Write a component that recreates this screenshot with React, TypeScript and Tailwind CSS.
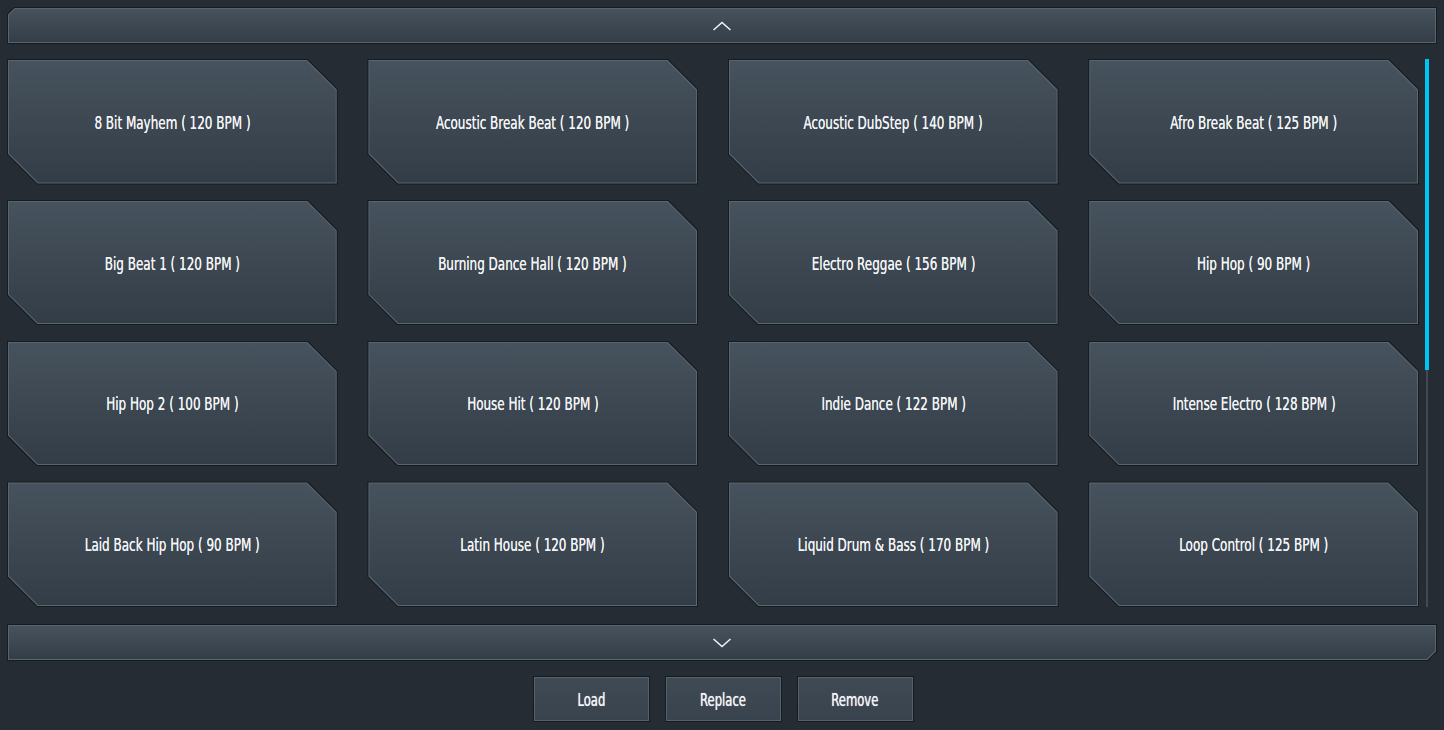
import React from 'react';

const loops = [
  '8 Bit Mayhem ( 120 BPM )',
  'Acoustic Break Beat ( 120 BPM )',
  'Acoustic DubStep ( 140 BPM )',
  'Afro Break Beat ( 125 BPM )',
  'Big Beat 1 ( 120 BPM )',
  'Burning Dance Hall ( 120 BPM )',
  'Electro Reggae ( 156 BPM )',
  'Hip Hop ( 90 BPM )',
  'Hip Hop 2 ( 100 BPM )',
  'House Hit ( 120 BPM )',
  'Indie Dance ( 122 BPM )',
  'Intense Electro ( 128 BPM )',
  'Laid Back Hip Hop ( 90 BPM )',
  'Latin House ( 120 BPM )',
  'Liquid Drum & Bass ( 170 BPM )',
  'Loop Control ( 125 BPM )',
];

// no narrow face installed, so squeeze the condensed one a bit
const font = "font-['Liberation_Sans_Narrow','DejaVu_Sans_Condensed',sans-serif]";

// card with cut top-right and bottom-left corners, two-tone border
const LoopCard = ({ name }: { name: string }) => (
  <button className="h-full w-full bg-[#161b20] p-px [clip-path:polygon(0_0,calc(100%_-_30px)_0,100%_30px,100%_100%,30px_100%,0_calc(100%_-_30px))]">
    <div className="h-full w-full bg-[#58646e] p-px [clip-path:polygon(0_0,calc(100%_-_29.6px)_0,100%_29.6px,100%_100%,29.6px_100%,0_calc(100%_-_29.6px))]">
      <div className="flex h-full w-full items-center justify-center bg-gradient-to-b from-[#46525d] to-[#333d47] pt-[1px] [clip-path:polygon(0_0,calc(100%_-_29.2px)_0,100%_29.2px,100%_100%,29.2px_100%,0_calc(100%_-_29.2px))]">
        <span className={`${font} inline-block scale-x-[0.74] whitespace-nowrap text-[18px] text-[#f3f4f6] [text-shadow:0_0_0.5px_#f3f4f6]`}>
          {name}
        </span>
      </div>
    </div>
  </button>
);

const Chevron = ({ up }: { up?: boolean }) => (
  <svg width="20" height="10" viewBox="0 0 20 10" fill="none">
    <path
      d={up ? 'M1.5 9L10 1.5L18.5 9' : 'M1.5 1L10 8.5L18.5 1'}
      stroke="#f2f4f6"
      strokeWidth="1.5"
    />
  </svg>
);

const ScrollBar = ({ up }: { up?: boolean }) => {
  const outer = up
    ? '[clip-path:polygon(7px_0,100%_0,100%_100%,0_100%,0_7px)]'
    : '[clip-path:polygon(0_0,100%_0,100%_calc(100%_-_9px),calc(100%_-_9px)_100%,0_100%)]';
  const mid = up
    ? '[clip-path:polygon(6.6px_0,100%_0,100%_100%,0_100%,0_6.6px)]'
    : '[clip-path:polygon(0_0,100%_0,100%_calc(100%_-_8.6px),calc(100%_-_8.6px)_100%,0_100%)]';
  const inner = up
    ? '[clip-path:polygon(6.2px_0,100%_0,100%_100%,0_100%,0_6.2px)]'
    : '[clip-path:polygon(0_0,100%_0,100%_calc(100%_-_8.2px),calc(100%_-_8.2px)_100%,0_100%)]';
  return (
    <button className={`h-[37px] w-full bg-[#161b20] p-px ${outer}`}>
      <div className={`h-full w-full bg-[#58646e] p-px ${mid}`}>
        <div className={`flex h-full w-full items-center justify-center bg-gradient-to-b from-[#46525d] to-[#343e48] ${inner}`}>
          <Chevron up={up} />
        </div>
      </div>
    </button>
  );
};

const ActionButton = ({ label }: { label: string }) => (
  <button className="h-[46px] w-[117px] border border-[#161b20] bg-[#55616b] p-px">
    <div className="flex h-full w-full items-center justify-center bg-gradient-to-b from-[#3f4a55] to-[#38434d] pt-[1px]">
      <span className={`${font} inline-block scale-x-[0.72] text-[18px] text-[#f3f4f6] [text-shadow:0_0_0.8px_#f3f4f6]`}>
        {label}
      </span>
    </div>
  </button>
);

export default function App() {
  return (
    <div className="flex h-[730px] w-full flex-col bg-[#262c33] px-[7px] pt-[7px]">
      <ScrollBar up />
      <div className="mt-[15px] flex h-[548px]">
        <div className="grid flex-1 grid-cols-4 grid-rows-4 gap-x-[29.7px] gap-y-[15.3px]">
          {loops.map((l) => (
            <LoopCard key={l} name={l} />
          ))}
        </div>
        <div className="ml-[6px] mr-[8px] flex h-[548px] w-[4px] flex-col items-center">
          <div className="h-[311px] w-[4px] bg-[#00c4f2]" />
          <div className="w-[2px] flex-1 bg-[#414b55]" />
        </div>
      </div>
      <div className="mt-[17px]">
        <ScrollBar />
      </div>
      <div className="mt-[15px] flex justify-center gap-[15px] pl-[2px]">
        <ActionButton label="Load" />
        <ActionButton label="Replace" />
        <ActionButton label="Remove" />
      </div>
    </div>
  );
}
